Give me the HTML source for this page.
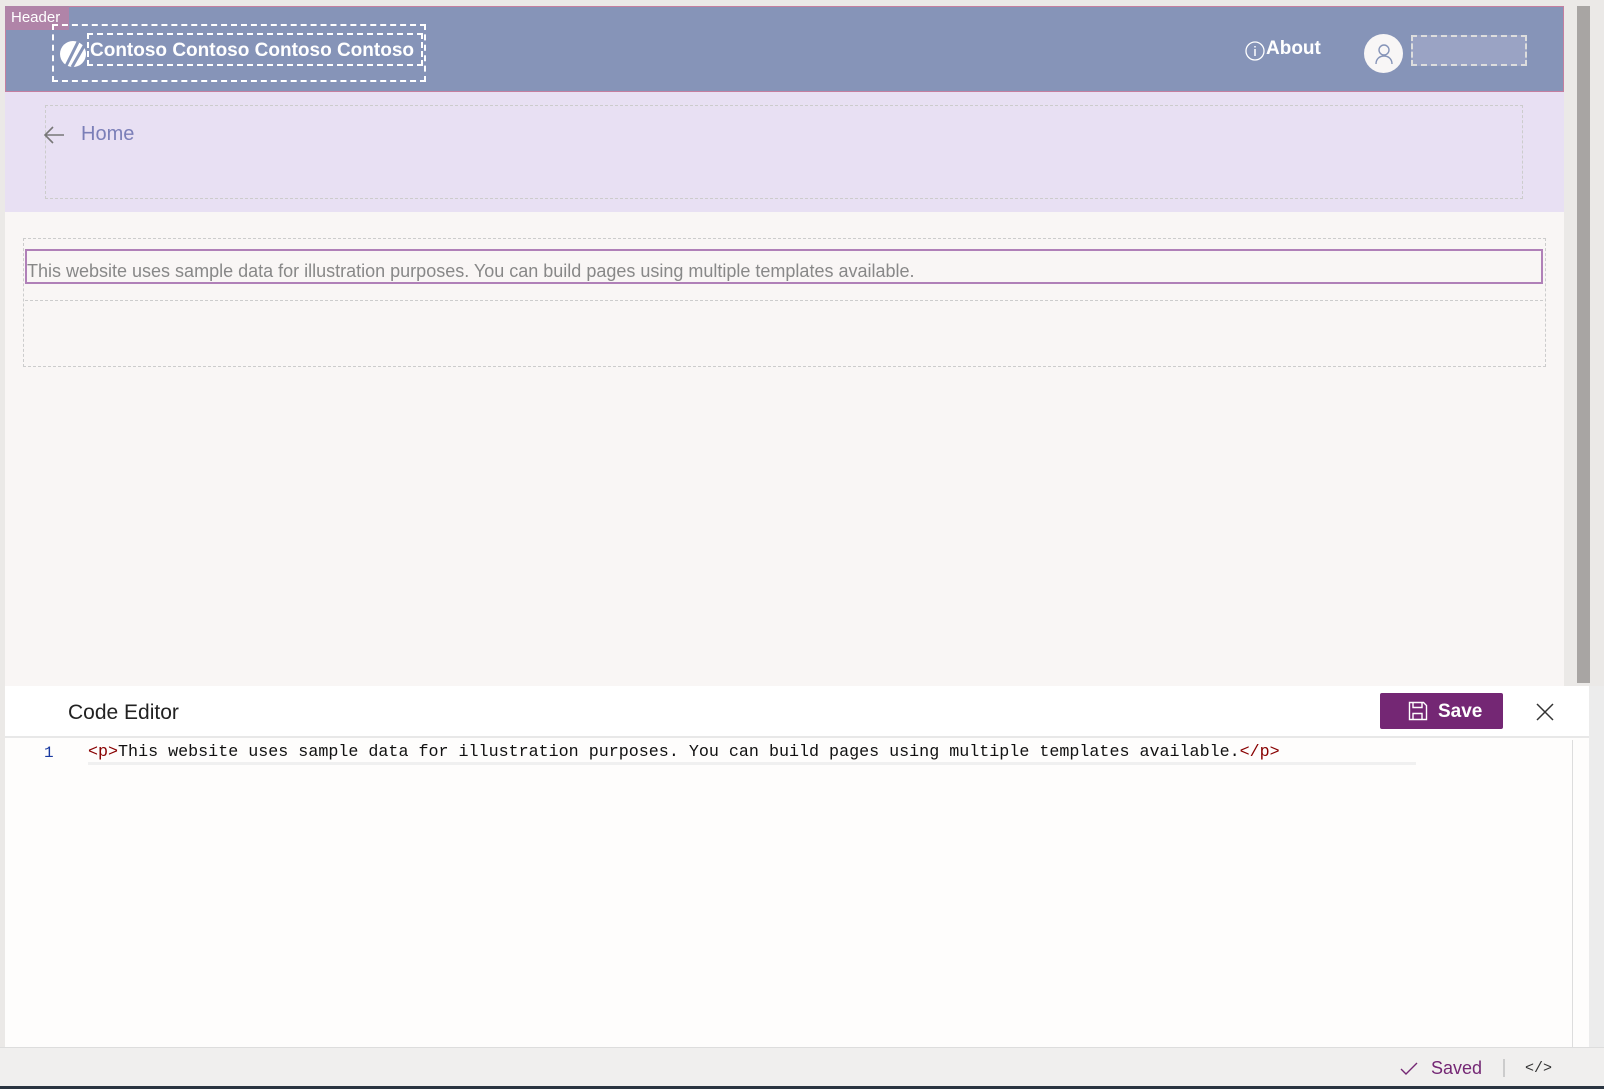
<!DOCTYPE html>
<html><head><style>
*{margin:0;padding:0;box-sizing:border-box}
body{width:1604px;height:1089px;background:#ebe9e7;position:relative;overflow:hidden;font-family:"Liberation Sans",sans-serif}
.a{position:absolute}
</style></head><body>
<div class="a" style="left:5px;top:6px;width:1559px;height:86px;background:#8694b8;border:1px solid #c47fa0"></div>
<div class="a" style="left:5px;top:6px;width:64px;height:24px;background:#b084a8;color:#fff;font-size:15px;line-height:24px;padding-left:6px">Header</div>
<div class="a" style="left:52px;top:24px;width:374px;height:58px;border:2px dashed #fff"></div>
<div class="a" style="left:87px;top:33px;width:336px;height:33px;border:2px dashed #fff"></div>
<svg class="a" style="left:56px;top:36px" width="34" height="34" viewBox="0 0 34 34"><circle cx="17" cy="18" r="13" fill="#fff"/><path d="M10 30 L22 6 M16 31 L28 10" stroke="#8694b8" stroke-width="3"/></svg>
<div class="a" style="left:90px;top:40px;color:#fff;font-size:19px;font-weight:bold;white-space:nowrap">Contoso Contoso Contoso Contoso</div>
<svg class="a" style="left:1245px;top:41px" width="20" height="20"><circle cx="10" cy="10" r="9" fill="none" stroke="#fff" stroke-width="1.3"/><path d="M10 8v7M10 5v1.5" stroke="#fff" stroke-width="1.5"/></svg>
<div class="a" style="left:1266px;top:38px;color:#fff;font-size:19px;font-weight:bold">About</div>
<div class="a" style="left:1364px;top:34px;width:39px;height:39px;border-radius:50%;background:#f8f6f6"></div>
<svg class="a" style="left:1372px;top:42px" width="24" height="24"><circle cx="12" cy="8" r="5" fill="none" stroke="#8694b8" stroke-width="1.4"/><path d="M4 22c0-5 3.5-8 8-8s8 3 8 8" fill="none" stroke="#8694b8" stroke-width="1.4"/></svg>
<div class="a" style="left:1411px;top:35px;width:116px;height:31px;border:2px dashed #ddd;background:#9aa3c4"></div>
<div class="a" style="left:5px;top:92px;width:1559px;height:120px;background:#e8e0f3"></div>
<div class="a" style="left:45px;top:105px;width:1478px;height:94px;border:1px dashed #ccc"></div>
<svg class="a" style="left:42px;top:125px" width="24" height="20"><path d="M22 10H3M11 2L3 10l8 8" fill="none" stroke="#777" stroke-width="1.6"/></svg>
<div class="a" style="left:81px;top:123px;color:#7b7fb8;font-size:20px">Home</div>
<div class="a" style="left:5px;top:212px;width:1559px;height:474px;background:#f9f6f5"></div>
<div class="a" style="left:23px;top:238px;width:1523px;height:129px;border:1px dashed #ccc"></div>
<div class="a" style="left:25px;top:249px;width:1518px;height:35px;border:2px solid #b080b8"></div>
<div class="a" style="left:25px;top:300px;width:1518px;height:1px;border-top:1px dashed #ccc"></div>
<div class="a" style="left:27px;top:261px;color:#888;font-size:18px;white-space:nowrap">This website uses sample data for illustration purposes. You can build pages using multiple templates available.</div>
<div class="a" style="left:1577px;top:6px;width:13px;height:677px;background:#a8a5a3"></div>
<div class="a" style="left:5px;top:686px;width:1584px;height:361px;background:#fefdfc"></div>
<div class="a" style="left:5px;top:686px;width:1584px;height:52px;background:#fff;border-bottom:2px solid #e8e8e8"></div>
<div class="a" style="left:68px;top:701px;font-size:21px;color:#222">Code Editor</div>
<div class="a" style="left:1380px;top:693px;width:123px;height:36px;background:#742774;border-radius:2px"></div>
<svg class="a" style="left:1408px;top:701px" width="20" height="20"><path d="M1.5 1.5h14l3 3v14h-17z M5 1.5v5h9v-5 M5 18.5v-6h9v6" fill="none" stroke="#fff" stroke-width="1.4"/></svg>
<div class="a" style="left:1438px;top:701px;color:#fff;font-size:19px;font-weight:bold">Save</div>
<svg class="a" style="left:1536px;top:703px" width="18" height="18"><path d="M1 1l16 16M17 1L1 17" stroke="#333" stroke-width="1.5"/></svg>
<div class="a" style="left:1572px;top:740px;width:1px;height:307px;background:#ddd"></div>
<div class="a" style="left:1589px;top:686px;width:15px;height:400px;background:#ececec"></div>
<div class="a" style="left:88px;top:762px;width:1328px;height:3px;background:#f0f0f0"></div>
<div class="a" style="left:44px;top:744px;color:#1a3aa0;font-family:'Liberation Mono',monospace;font-size:16px">1</div>
<div class="a" style="left:88px;top:743px;font-family:'Liberation Mono',monospace;font-size:16.7px;color:#111;white-space:nowrap"><span style="color:#800">&lt;p&gt;</span>This website uses sample data for illustration purposes. You can build pages using multiple templates available.<span style="color:#800">&lt;/p&gt;</span></div>
<div class="a" style="left:0;top:1047px;width:1604px;height:39px;background:#f0efee;border-top:1px solid #ddd"></div>
<svg class="a" style="left:1400px;top:1062px" width="18" height="14"><path d="M1 7l5 5L17 1" fill="none" stroke="#742774" stroke-width="1.4"/></svg>
<div class="a" style="left:1431px;top:1058px;color:#742774;font-size:18px">Saved</div>
<div class="a" style="left:1503px;top:1059px;width:2px;height:18px;background:#ccc"></div>
<div class="a" style="left:1525px;top:1060px;color:#333;font-size:15px;font-family:'Liberation Mono',monospace">&lt;/&gt;</div>
<div class="a" style="left:0;top:1086px;width:1604px;height:3px;background:#2a3440"></div>
</body></html>
